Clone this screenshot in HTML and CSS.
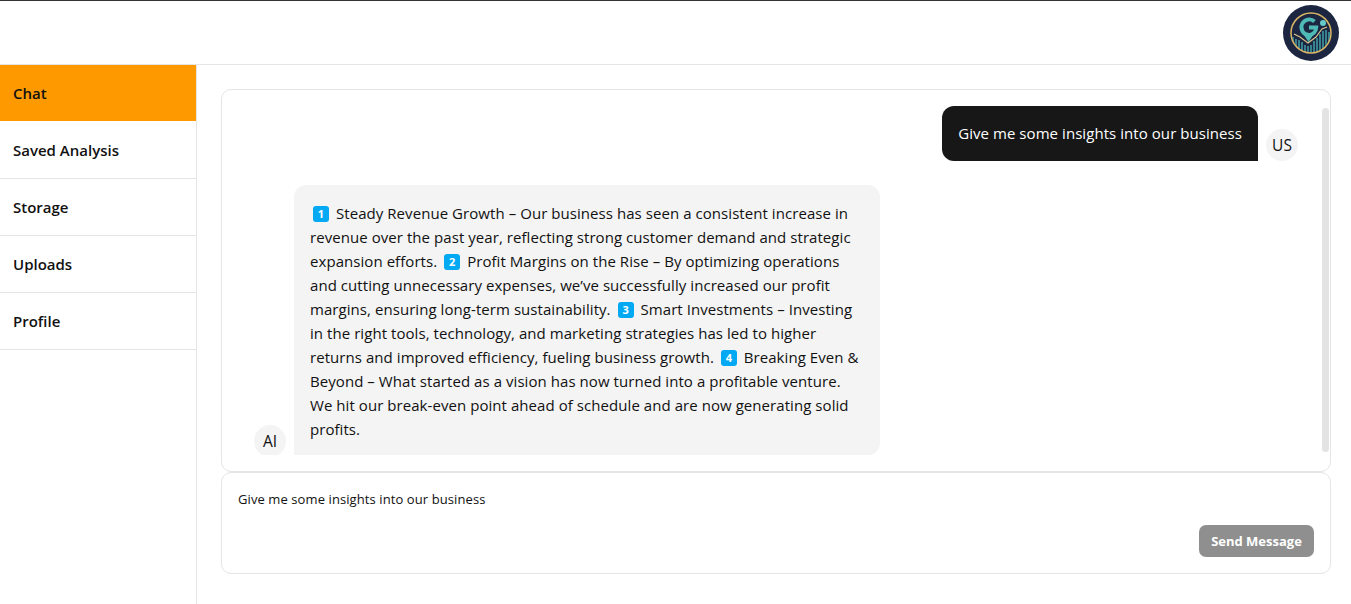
FILE: index.html
```html
<!DOCTYPE html>
<html lang="en">
<head>
<meta charset="utf-8">
<title>Chat</title>
<link rel="stylesheet" href="styles.css">
</head>
<body>
<div class="app">
  <header class="topbar">
    <svg class="logo" viewBox="0 0 56 56" aria-label="Logo">
      <defs><clipPath id="ring"><circle cx="28" cy="28" r="19.500"/></clipPath></defs>
      <circle cx="28" cy="28" r="28" fill="#1c2640"/>
      <g clip-path="url(#ring)">
        <path d="M10 32V50M13 34V50M16 35V50M19 37V50M22 40V50M25 41V50M28 40V50M31 36V50M34 33V50M37 29V50M40 26V50M43 25V50M46 27V50" stroke="#3f9aa3" stroke-width="1.600"/>
      </g>
      <circle cx="28" cy="28" r="20" fill="none" stroke="#d9b566" stroke-width="1.500"/>
      <path d="M11 29l6 3 8 6 8-6 6-8 5-2" fill="none" stroke="#dcc68e" stroke-width="1.100"/>
      <path d="M31.500 16.500A7.800 7.800 0 1 0 25.500 30L25.500 30A7.800 7.800 0 0 0 33.300 22.500H26" fill="none" stroke="#4fb9b5" stroke-width="3.800"/>
      <path d="M20.500 29.500L25.500 37L30.500 29.500Z" fill="#4fb9b5"/>
      <circle cx="40" cy="18" r="3" fill="#63c9c9"/>
    </svg>
  </header>
  <div class="body">
    <nav class="sidebar">
      <a class="nav-item active">Chat</a>
      <a class="nav-item">Saved Analysis</a>
      <a class="nav-item">Storage</a>
      <a class="nav-item">Uploads</a>
      <a class="nav-item">Profile</a>
    </nav>
    <main class="main">
      <section class="chat-panel">
        <div class="messages">
          <div class="msg msg-user">
            <div class="bubble bubble-user">Give me some insights into our business</div>
            <div class="avatar">US</div>
          </div>
          <div class="msg msg-ai">
            <div class="avatar">AI</div>
            <div class="bubble bubble-ai"><span class="key">1</span> Steady Revenue Growth – Our business has seen a consistent increase in revenue over the past year, reflecting strong customer demand and strategic expansion efforts. <span class="key">2</span> Profit Margins on the Rise – By optimizing operations and cutting unnecessary expenses, we’ve successfully increased our profit margins, ensuring long-term sustainability. <span class="key">3</span> Smart Investments – Investing in the right tools, technology, and marketing strategies has led to higher returns and improved efficiency, fueling business growth. <span class="key">4</span> Breaking Even &amp; Beyond – What started as a vision has now turned into a profitable venture. We hit our break-even point ahead of schedule and are now generating solid profits.</div>
          </div>
        </div>
        <div class="scroll-thumb"></div>
      </section>
      <section class="composer">
        <div class="composer-text">Give me some insights into our business</div>
        <div class="composer-actions"><button class="send">Send Message</button></div>
      </section>
    </main>
  </div>
</div>
</body>
</html>
```
FILE: styles.css
```css
* { box-sizing: border-box; }
html, body { margin: 0; height: 100%; background: #fff; }
body { font-family: "Open Sans", "Noto Sans", sans-serif; color: #111; overflow: hidden; }
.app { height: 604px; display: flex; flex-direction: column; }
.topbar { height: 65px; flex: none; border-top: 1px solid #333; border-bottom: 1px solid #e5e5e5; display: flex; justify-content: flex-end; align-items: center; padding-right: 12px; padding-top: 1px; }
.logo { width: 56px; height: 56px; display: block; }
.body { flex: 1; display: flex; min-height: 0; }
.sidebar { width: 197px; flex: none; border-right: 1px solid #e5e5e5; }
.nav-item { display: flex; align-items: center; height: 57px; padding: 0 13px; border-bottom: 1px solid #e5e5e5; font-size: 15px; font-weight: 600; color: #111; }
.nav-item.active { background: #ff9900; border-bottom-color: #fff; }
.main { flex: 1; padding: 24px 20px 30px 24px; display: flex; flex-direction: column; }
.chat-panel { height: 383px; flex: none; border: 1px solid #e5e5e5; border-radius: 10px; position: relative; padding: 16px 32px; }
.messages { height: 349px; overflow: hidden; display: flex; flex-direction: column; gap: 24px; }
.msg { display: flex; align-items: flex-end; gap: 8px; flex: none; }
.msg-user { justify-content: flex-end; }
.msg-ai .avatar { margin-bottom: -2px; }
.avatar { width: 32px; height: 32px; flex: none; border-radius: 50%; background: #f4f4f5; display: flex; align-items: center; justify-content: center; font-size: 15.500px; }
.bubble { font-size: 15px; line-height: 24px; letter-spacing: 0.06px; }
.bubble-user { height: 55px; padding: 15px 16px; background: #171717; color: #fff; border-radius: 12px 12px 0 12px; white-space: nowrap; }
.bubble-ai { width: 586px; padding: 16px 16px 14px; background: #f4f4f4; border-radius: 12px 12px 12px 0; }
.key { display: inline-flex; align-items: center; justify-content: center; width: 16px; height: 16px; margin: 0 3px; vertical-align: 1px; border-radius: 3px; background: #04a9f4; color: #fff; font-size: 11px; font-weight: 700; line-height: 16px; letter-spacing: 0; }
.scroll-thumb { position: absolute; right: 1px; top: 18px; width: 7px; height: 344px; border-radius: 4px; background: #e3e3e3; }
.composer { height: 102px; flex: none; border: 1px solid #e5e5e5; border-radius: 10px; padding: 16px; display: flex; flex-direction: column; justify-content: space-between; }
.composer-text { font-size: 13px; line-height: 20px; letter-spacing: 0.09px; color: #111; }
.composer-actions { display: flex; justify-content: flex-end; }
.send { width: 115px; height: 32px; border: 0; border-radius: 7px; background: #8f8f8f; color: #fff; font-family: inherit; font-size: 13px; font-weight: 700; padding: 0; }
```
